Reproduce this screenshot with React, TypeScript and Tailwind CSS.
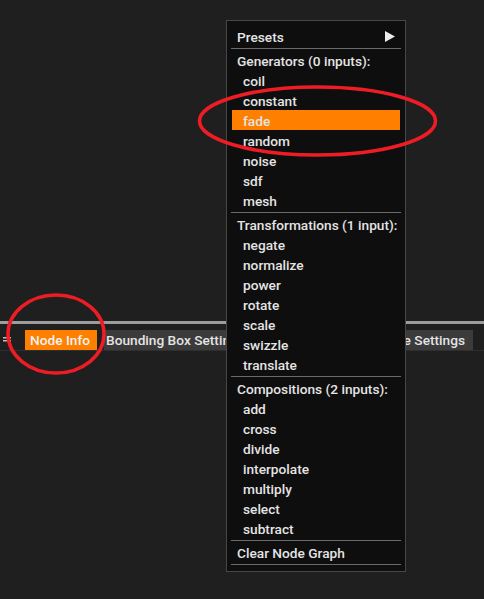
import React from 'react';

const groups = [
  { title: 'Generators (0 inputs):', items: ['coil', 'constant', 'fade', 'random', 'noise', 'sdf', 'mesh'] },
  { title: 'Transformations (1 input):', items: ['negate', 'normalize', 'power', 'rotate', 'scale', 'swizzle', 'translate'] },
  { title: 'Compositions (2 inputs):', items: ['add', 'cross', 'divide', 'interpolate', 'multiply', 'select', 'subtract'] },
];

const Sep = () => <div className="h-px bg-[#6a6a6a] mt-[2px] mb-px" />;

const ContextMenu: React.FC = () => (
  <div className="absolute left-[226px] top-[20px] w-[180px] bg-[#0e0e0e] border border-[#474747] px-[4px] pt-[5px] pb-[6px]">
    <div className="h-5 flex items-center justify-between pl-[6px] pr-[6px] pt-[2px]">
      <span>Presets</span>
      <svg width="10" height="11" viewBox="0 0 10 11" className="-mt-[2px]">
        <path d="M0 0 L10 5.5 L0 11 Z" fill="#ececec" />
      </svg>
    </div>
    <Sep />
    {groups.map(g => (
      <div key={g.title}>
        <div className="h-5 flex items-center pl-[6px] pt-[2px] whitespace-nowrap">{g.title}</div>
        {g.items.map(item => (
          <div
            key={item}
            className={`h-5 flex items-center pl-[11px] pt-[2px] mx-px ${item === 'fade' ? 'bg-[#ff7f00]' : ''}`}
          >
            {item}
          </div>
        ))}
        <Sep />
      </div>
    ))}
    <div className="h-5 flex items-center pl-[6px] pt-[2px]">Clear Node Graph</div>
    <div className="h-px bg-[#6a6a6a] mt-[2px]" />
  </div>
);

const App: React.FC = () => {
  return (
    <div
      className="relative w-full h-[599px] bg-[#1f1f1f] overflow-hidden text-[13.7px] text-[#e4e4e4] font-medium"
      style={{ fontFamily: 'Roboto, "Noto Sans", sans-serif' }}
    >
      <div className="h-[321px]" />
      <div className="h-[3px] bg-[#9d9d9d]" />
      <div className="h-[6px]" />
      <div className="flex items-stretch h-[20px] border-b border-[#2e2e2e] box-content">
        <div className="w-[25px] flex items-center pl-[3px]">
          <svg width="10" height="8" viewBox="0 0 10 8">
            <rect x="0" y="1" width="8" height="1.5" fill="#bdbdbd" />
            <rect x="0" y="4" width="8" height="1.5" fill="#bdbdbd" />
          </svg>
        </div>
        <div className="bg-[#ff7f00] flex items-center px-[5px] w-[72px] text-[#f2f2f2] whitespace-nowrap">Node Info</div>
        <div className="w-[7px]" />
        <div className="bg-[#3b3b3b] flex items-center px-[2px] w-[150px] whitespace-nowrap overflow-hidden">
          Bounding Box Settings
        </div>
        <div className="w-[4px]" />
        <div className="bg-[#3b3b3b] flex items-center justify-end pr-[8px] w-[215px] whitespace-nowrap overflow-hidden">
          Volume Settings
        </div>
      </div>

      <ContextMenu />

      <svg className="absolute inset-0 pointer-events-none" width="484" height="599">
        <ellipse cx="317.5" cy="121" rx="118" ry="34" fill="none" stroke="#ee1c24" strokeWidth="3.5" />
        <ellipse cx="56" cy="334" rx="48" ry="39" fill="none" stroke="#ee1c24" strokeWidth="3.5" />
      </svg>
    </div>
  );
};

export default App;
